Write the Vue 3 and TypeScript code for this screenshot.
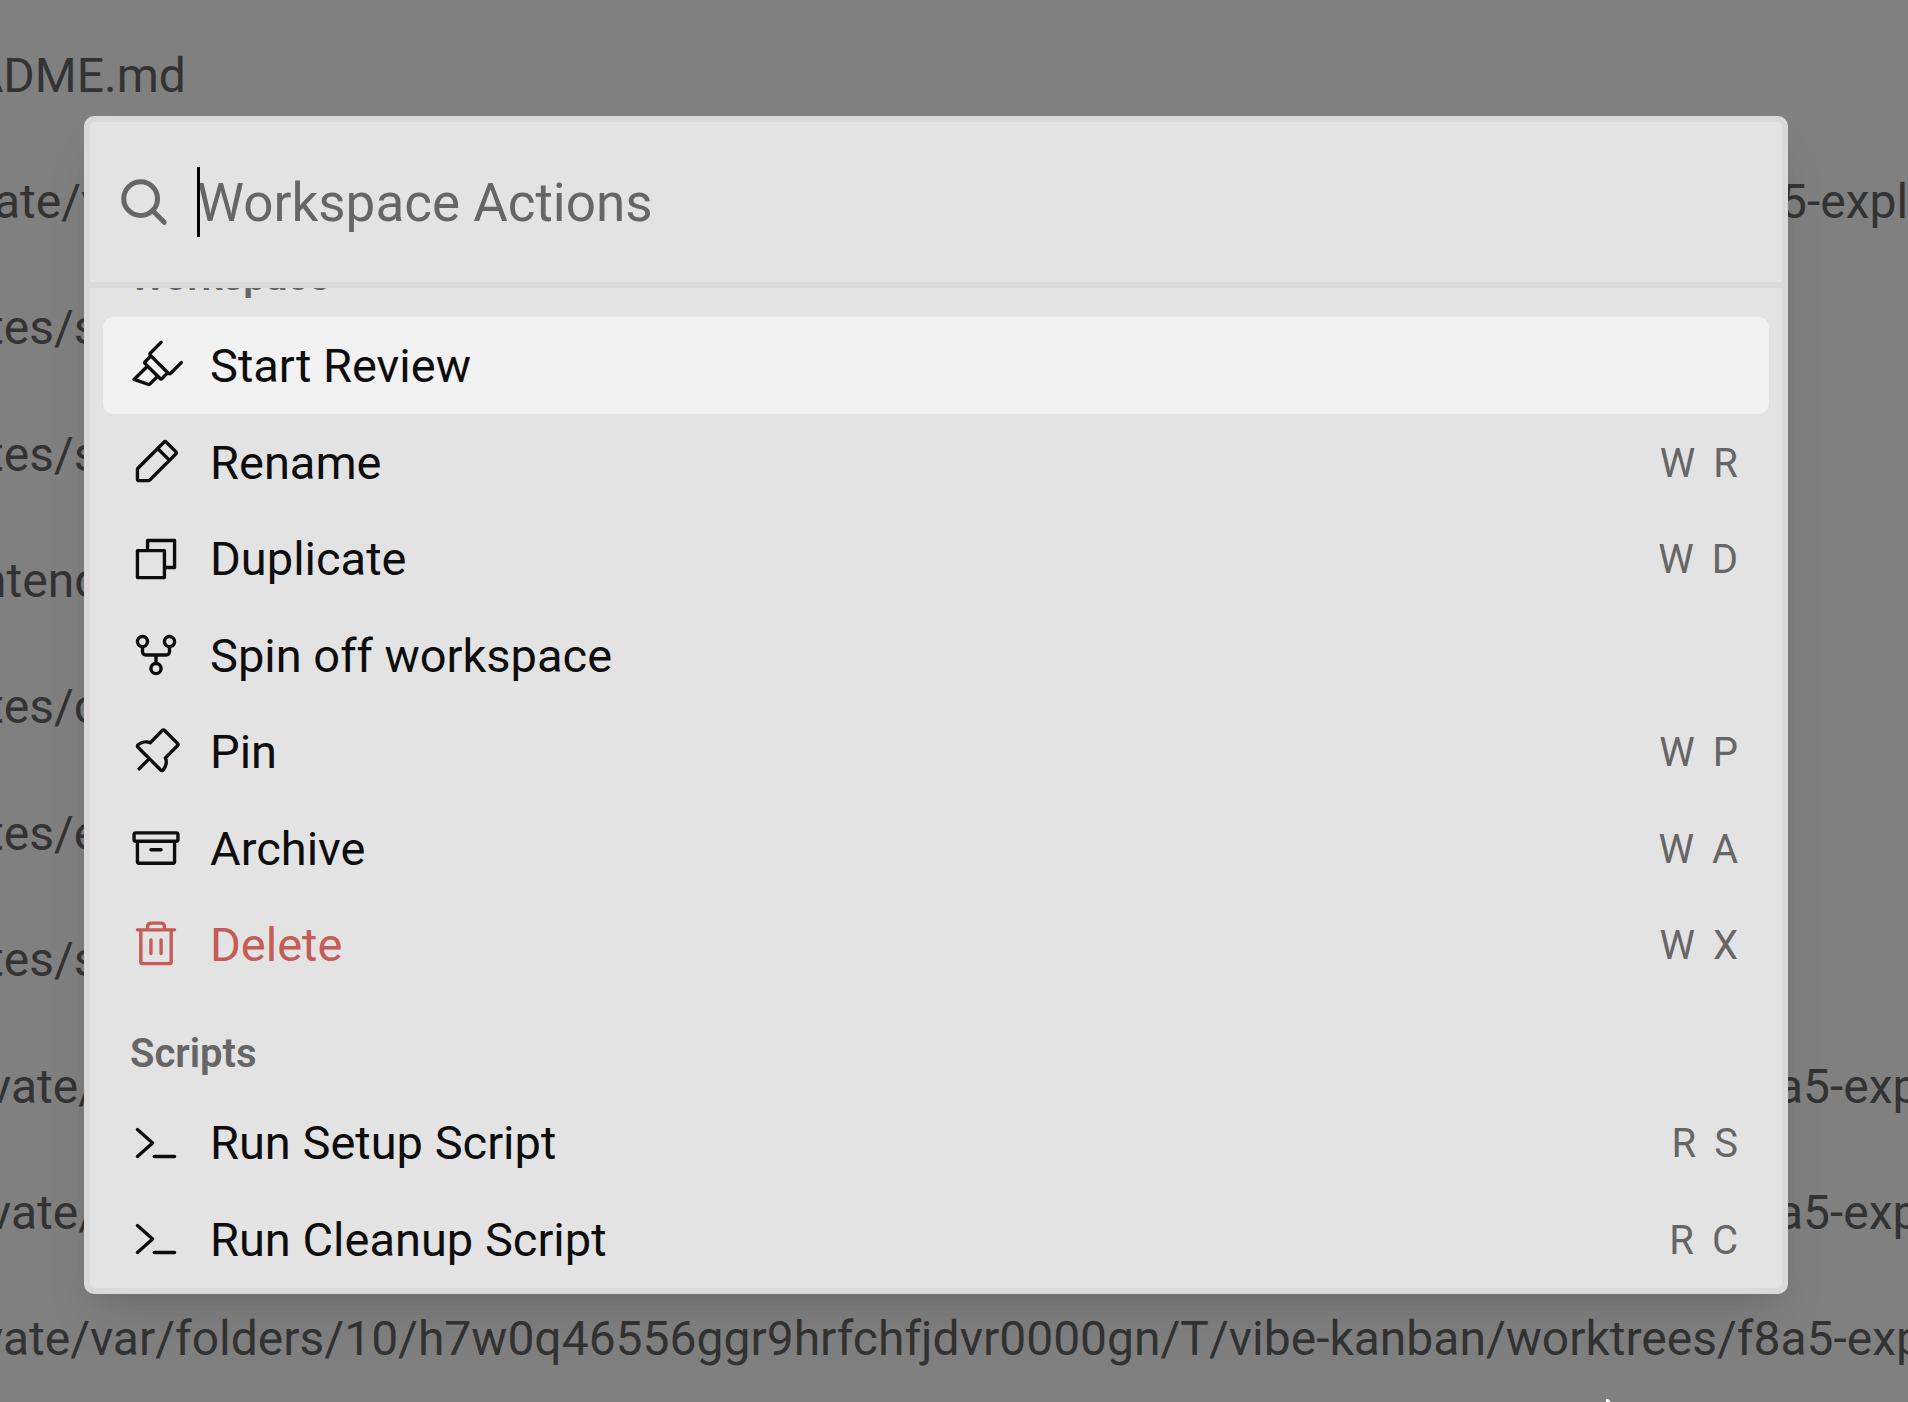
<script setup lang="ts">
import { onMounted, ref } from 'vue'

interface Action {
  label: string
  icon: keyof typeof icons
  keys?: string[]
  active?: boolean
  danger?: boolean
}

interface Group {
  heading: string
  actions: Action[]
}

interface PathRow {
  start: string
  cut: string
  end?: string
  endCut?: string
}

const icons = {
  highlighter:
    'M253.66,106.34a8,8,0,0,0-11.32,0L192,156.69,107.31,72l50.35-50.34a8,8,0,1,0-11.32-11.32L96,60.69A16,16,0,0,0,93.18,79.5L72,100.69a16,16,0,0,0,0,22.62L76.69,128,18.34,186.34a8,8,0,0,0,3.13,13.25l72,24A7.88,7.88,0,0,0,96,224a8,8,0,0,0,5.66-2.34L136,187.31l4.69,4.69a16,16,0,0,0,22.62,0l21.19-21.18A16,16,0,0,0,203.31,168l50.35-50.34A8,8,0,0,0,253.66,106.34ZM93.84,206.85l-55-18.35L88,139.31,124.69,176ZM152,180.69,83.31,112,104,91.31,172.69,160Z',
  pencil:
    'M227.31,73.37,182.63,28.68a16,16,0,0,0-22.63,0L36.69,152A15.86,15.86,0,0,0,32,163.31V208a16,16,0,0,0,16,16H92.69A15.86,15.86,0,0,0,104,219.31L227.31,96a16,16,0,0,0,0-22.63ZM92.69,208H48V163.31l88-88L180.69,120ZM192,108.68,147.31,64l24-24L216,84.68Z',
  copy:
    'M216,32H88a8,8,0,0,0-8,8V80H40a8,8,0,0,0-8,8V216a8,8,0,0,0,8,8H168a8,8,0,0,0,8-8V176h40a8,8,0,0,0,8-8V40A8,8,0,0,0,216,32ZM160,208H48V96H160Zm48-48H176V88a8,8,0,0,0-8-8H96V48H208Z',
  fork:
    'M224,64a32,32,0,1,0-40,31v17a8,8,0,0,1-8,8H80a8,8,0,0,1-8-8V95a32,32,0,1,0-16,0v17a24,24,0,0,0,24,24h40v25a32,32,0,1,0,16,0V136h40a24,24,0,0,0,24-24V95A32.06,32.06,0,0,0,224,64ZM48,64A16,16,0,1,1,64,80,16,16,0,0,1,48,64Zm96,128a16,16,0,1,1-16-16A16,16,0,0,1,144,192ZM192,80a16,16,0,1,1,16-16A16,16,0,0,1,192,80Z',
  pin:
    'M235.32,81.37,174.63,20.69a16,16,0,0,0-22.63,0L98.37,74.49c-10.66-3.34-35-7.37-60.4,13.14a16,16,0,0,0-1.29,23.78L85,159.71,42.34,202.34a8,8,0,0,0,11.32,11.32L96.29,171l48.29,48.29A16,16,0,0,0,155.9,224c.38,0,.75,0,1.13,0a15.93,15.93,0,0,0,11.64-6.33c19.64-26.1,17.75-47.32,13.19-60L235.33,104A16,16,0,0,0,235.32,81.37ZM224,92.69h0l-57.27,57.46a8,8,0,0,0-1.49,9.22c9.46,18.93-1.8,38.59-9.34,48.62L48,100.08c12.08-9.74,23.64-12.31,32.48-12.31A40.13,40.13,0,0,1,96.81,91a8,8,0,0,0,9.25-1.51L163.32,32,224,92.68Z',
  archive:
    'M224,48H32A16,16,0,0,0,16,64V88a16,16,0,0,0,16,16v88a16,16,0,0,0,16,16H208a16,16,0,0,0,16-16V104a16,16,0,0,0,16-16V64A16,16,0,0,0,224,48ZM208,192H48V104H208ZM224,88H32V64H224V88ZM96,136a8,8,0,0,1,8-8h48a8,8,0,0,1,0,16H104A8,8,0,0,1,96,136Z',
  trash:
    'M216,48H176V40a24,24,0,0,0-24-24H104A24,24,0,0,0,80,40v8H40a8,8,0,0,0,0,16h8V208a16,16,0,0,0,16,16H192a16,16,0,0,0,16-16V64h8a8,8,0,0,0,0-16ZM96,40a8,8,0,0,1,8-8h48a8,8,0,0,1,8,8v8H96Zm96,168H64V64H192ZM112,104v64a8,8,0,0,1-16,0V104a8,8,0,0,1,16,0Zm48,0v64a8,8,0,0,1-16,0V104a8,8,0,0,1,16,0Z',
  terminal:
    'M117.31,134l-72,64a8,8,0,1,1-10.63-12L100,128,34.69,70A8,8,0,1,1,45.32,58l72,64a8,8,0,0,1,0,12ZM216,184H120a8,8,0,0,0,0,16h96a8,8,0,0,0,0-16Z',
}

const groups: Group[] = [
  {
    heading: 'Workspace',
    actions: [
      { label: 'Start Review', icon: 'highlighter', active: true },
      { label: 'Rename', icon: 'pencil', keys: ['W', 'R'] },
      { label: 'Duplicate', icon: 'copy', keys: ['W', 'D'] },
      { label: 'Spin off workspace', icon: 'fork' },
      { label: 'Pin', icon: 'pin', keys: ['W', 'P'] },
      { label: 'Archive', icon: 'archive', keys: ['W', 'A'] },
      { label: 'Delete', icon: 'trash', keys: ['W', 'X'], danger: true },
    ],
  },
  {
    heading: 'Scripts',
    actions: [
      { label: 'Run Setup Script', icon: 'terminal', keys: ['R', 'S'] },
      { label: 'Run Cleanup Script', icon: 'terminal', keys: ['R', 'C'] },
    ],
  },
]

const paths: PathRow[] = [
  { start: 'ADME.md', cut: 'cut-l' },
  { start: 'ate/v', cut: 'cut-xs', end: '5-expl', endCut: 'end-near' },
  { start: 'tes/s', cut: 'cut-s' },
  { start: 'tes/s', cut: 'cut-s' },
  { start: 'ntend', cut: 'cut-m' },
  { start: 'tes/c', cut: 'cut-s' },
  { start: 'tes/e', cut: 'cut-s' },
  { start: 'tes/s', cut: 'cut-s' },
  { start: 'vate/', cut: 'cut-s', end: 'a5-exp', endCut: 'end-far' },
  { start: 'vate/', cut: 'cut-s', end: 'a5-exp', endCut: 'end-far' },
  {
    start: 'vate/var/folders/10/h7w0q46556ggr9hrfchfjdvr0000gn/T/vibe-kanban/worktrees/f8a5-exp',
    cut: 'cut-m',
  },
]

const query = ref('')
const list = ref<HTMLElement | null>(null)

onMounted(() => {
  if (list.value) list.value.scrollTop = list.value.scrollHeight
})
</script>

<template>
  <main class="page">
    <div class="paths">
      <p v-for="(row, i) in paths" :key="i" class="path">
        <span :class="row.cut">{{ row.start }}</span>
        <span v-if="row.end" class="path-end" :class="row.endCut">{{ row.end }}</span>
      </p>
    </div>

    <div class="overlay">
      <section class="dialog" role="dialog" aria-label="Workspace Actions">
        <label class="search">
          <svg class="icon" viewBox="0 0 256 256" fill="none" stroke="currentColor" stroke-width="24" stroke-linecap="round">
            <circle cx="112" cy="112" r="80" />
            <path d="M168.6 168.6 224 224" />
          </svg>
          <span class="field">
            <input v-model="query" type="text" placeholder="Workspace Actions" aria-label="Workspace Actions" />
            <span class="caret"></span>
          </span>
        </label>

        <div ref="list" class="list">
          <section v-for="group in groups" :key="group.heading" class="group">
            <h2>{{ group.heading }}</h2>
            <div class="actions">
              <button
                v-for="action in group.actions"
                :key="action.label"
                type="button"
                class="action"
                :class="{ active: action.active, danger: action.danger }"
              >
                <svg class="icon" viewBox="0 0 256 256" fill="currentColor"><path :d="icons[action.icon]" /></svg>
                <span class="label">{{ action.label }}</span>
                <span v-if="action.keys" class="keys">
                  <kbd v-for="key in action.keys" :key="key">{{ key }}</kbd>
                </span>
              </button>
            </div>
          </section>
        </div>
      </section>
    </div>

    <svg class="pointer" viewBox="0 0 12 18"><path d="M1 0H3L12 9V11H7L5 17 1 14Z" fill="#fff" /></svg>
  </main>
</template>

<style>
body {
  margin: 0;
  background: #808080;
}
</style>

<style scoped>
.page {
  position: relative;
  box-sizing: border-box;
  height: 100vh;
  padding-top: 12px;
  overflow: hidden;
  background: #808080;
  font-family: Roboto, "Liberation Sans", sans-serif;
  font-size: 47px;
  color: #0d0d0d;
}

.paths {
  display: grid;
  grid-auto-rows: 1fr;
  height: 100%;
  font-size: 48px;
}

.path {
  display: flex;
  align-items: center;
  margin: 0;
  white-space: nowrap;
  color: #333;
}

.cut-xs {
  margin-left: -6px;
}

.cut-s {
  margin-left: -12px;
}

.cut-m {
  margin-left: -20px;
}

.cut-l {
  margin-left: -28px;
}

.path-end {
  margin-left: auto;
}

.end-near {
  width: 143px;
}

.end-far {
  width: 146px;
}

.overlay {
  position: absolute;
  inset: 0;
  padding: 116px 120px 0 84px;
}

.dialog {
  overflow: hidden;
  border: 6px solid #d9d9d9;
  border-radius: 10px;
  background: #e3e3e3;
  box-shadow: 0 32px 48px -10px rgb(0 0 0 / 0.1), 0 12px 18px -12px rgb(0 0 0 / 0.1);
}

.search {
  display: flex;
  align-items: center;
  gap: 26px;
  height: 160px;
  padding: 0 27px;
  border-bottom: 6px solid #d9d9d9;
  color: #666;
}

.icon {
  flex: none;
  width: 54px;
  height: 54px;
}

.field {
  position: relative;
  flex: 1;
}

.field input {
  box-sizing: border-box;
  display: block;
  width: 100%;
  height: 70px;
  padding: 2px 0 0;
  border: 0;
  outline: 0;
  background: none;
  font: inherit;
  font-size: 53px;
  color: #0d0d0d;
}

.field input::placeholder {
  color: #666;
  opacity: 1;
}

.caret {
  position: absolute;
  top: 0;
  left: 0;
  width: 3px;
  height: 70px;
  background: #000;
}

.list {
  box-sizing: border-box;
  max-height: 1000px;
  padding-bottom: 1px;
  overflow-y: auto;
  scrollbar-width: none;
}

.group {
  padding: 21px 13px 0;
}

h2 {
  margin: 0;
  padding: 0 27px;
  font-size: 40px;
  font-weight: 600;
  line-height: 80px;
  color: #666;
}

.actions {
  display: grid;
}

.action {
  display: flex;
  align-items: center;
  gap: 27px;
  height: 97px;
  padding: 0 31px 0 26px;
  border: 0;
  border-radius: 10px;
  background: none;
  font: inherit;
  text-align: left;
  color: inherit;
}

.action:nth-child(even) {
  height: 96px;
}

.active {
  background: #f2f2f2;
}

.danger {
  color: #c65b55;
}

.label {
  flex: 1;
}

.keys {
  display: flex;
  gap: 18px;
  padding-top: 2px;
  color: #666;
}

kbd {
  font-family: inherit;
  font-size: 40px;
}

.pointer {
  position: absolute;
  bottom: -15px;
  left: 1605px;
  width: 12px;
  height: 18px;
}
</style>
